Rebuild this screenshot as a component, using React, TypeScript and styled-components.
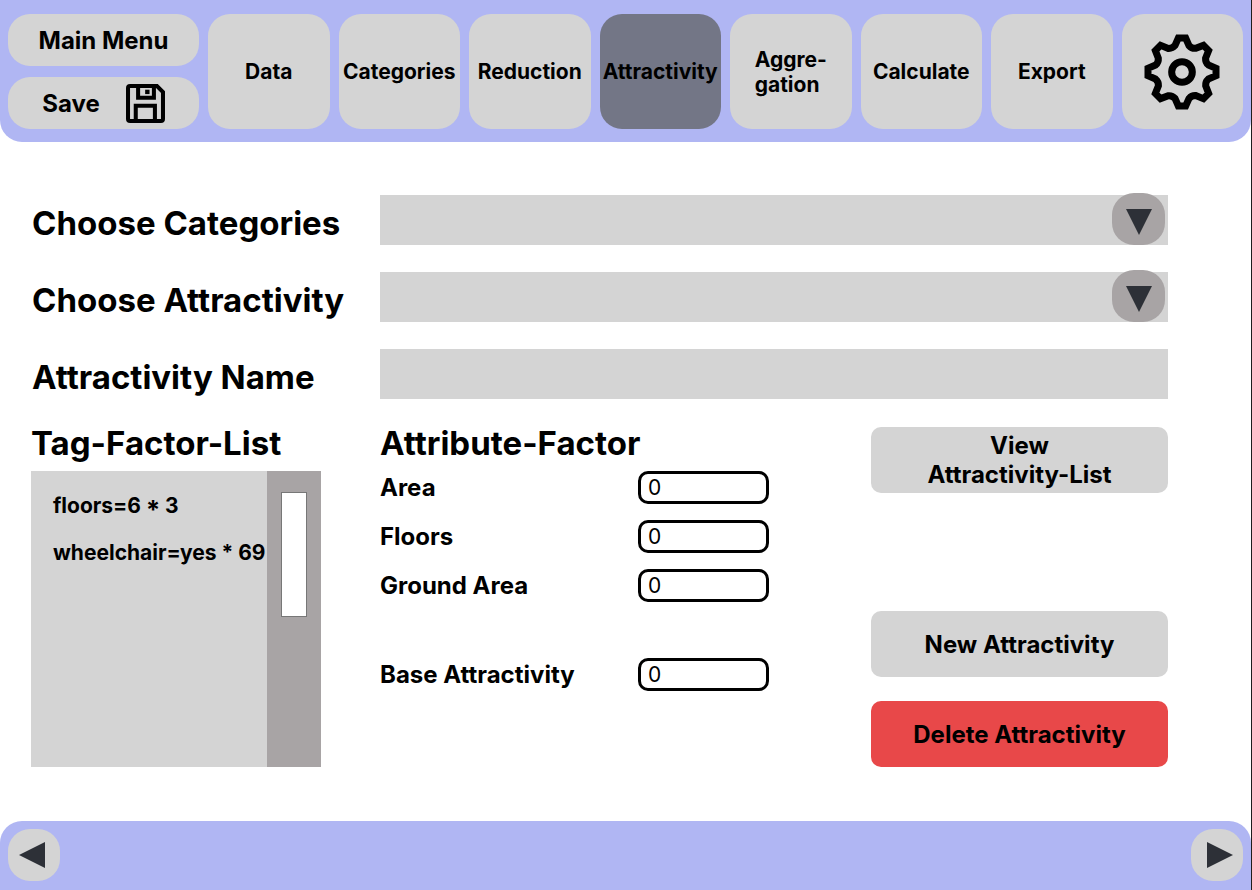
import React from "react";
import styled, { createGlobalStyle } from "styled-components";

const color = {
  lavender: "#b0b6f3",
  grey: "#d4d4d4",
  active: "#737686",
  taupe: "#a8a4a5",
  red: "#e84849",
  arrow: "#2d3037",
  edge: "#1e1e1e",
};

const GlobalStyle = createGlobalStyle`
  *, *::before, *::after { box-sizing: border-box; }
  body { margin: 0; background: #ffffff; }
  body, button, input, select {
    font-family: Inter, "Liberation Sans", sans-serif;
    font-variant-ligatures: no-common-ligatures;
    color: #000000;
  }
  button, input, select { margin: 0; padding: 0; border: 0; }
  button { cursor: pointer; }
  h2, ul { margin: 0; padding: 0; }
`;

const Page = styled.div`
  display: flex;
  flex-direction: column;
  min-height: 100vh;
  border-right: 1px solid ${color.edge};
`;

const Header = styled.header`
  display: grid;
  grid-template-columns: 191px minmax(0, 1fr);
  gap: 9px;
  padding: 14px 8px 13px;
  background: ${color.lavender};
  border-radius: 0 0 22px 22px;
`;

const MenuColumn = styled.div`
  display: flex;
  flex-direction: column;
  gap: 11px;
`;

const MenuButton = styled.button`
  display: flex;
  align-items: center;
  justify-content: center;
  gap: 26px;
  height: 52px;
  border-radius: 22px;
  background: ${color.grey};
  font-size: 24px;
  font-weight: 700;
`;

const Tabs = styled.nav`
  display: grid;
  grid-template-columns: repeat(8, minmax(0, 1fr));
  gap: 9px;
`;

const Tab = styled.button<{ $active?: boolean }>`
  display: flex;
  align-items: center;
  justify-content: center;
  border-radius: 22px;
  background: ${(p) => (p.$active ? color.active : color.grey)};
  font-size: 21px;
  font-weight: 700;
  line-height: 25px;
  text-align: left;
`;

const Main = styled.main`
  flex: 1;
  padding: 53px 83px 54px 31px;
`;

const Fields = styled.div`
  display: grid;
  grid-template-columns: 349px minmax(0, 1fr);
  row-gap: 27px;
  align-items: center;
`;

const FieldLabel = styled.label`
  padding: 6px 0 0 1px;
  font-size: 33px;
  font-weight: 700;
  line-height: 40px;
  white-space: nowrap;
`;

const SelectBox = styled.div`
  position: relative;
`;

const Select = styled.select`
  display: block;
  width: 100%;
  height: 50px;
  padding: 0 64px 0 12px;
  border-radius: 0;
  appearance: none;
  background: ${color.grey};
  font-size: 21px;
`;

const SelectArrow = styled.span`
  position: absolute;
  right: 3px;
  bottom: 0;
  display: grid;
  place-items: center;
  width: 53px;
  height: 52px;
  padding-top: 6px;
  border-radius: 22px;
  background: ${color.taupe};
  pointer-events: none;
`;

const NameInput = styled.input`
  width: 100%;
  height: 50px;
  padding: 0 12px;
  background: ${color.grey};
  font-size: 21px;
`;

const Lower = styled.div`
  display: grid;
  grid-template-columns: 290px minmax(0, 1fr) 297px;
  column-gap: 59px;
  margin-top: 28px;
`;

const Heading = styled.h2`
  height: 44px;
  font-size: 33px;
  font-weight: 700;
  line-height: 32px;
  white-space: nowrap;
`;

const TagBox = styled.div`
  display: grid;
  grid-template-columns: minmax(0, 1fr) 54px;
  height: 296px;
  background: ${color.grey};
`;

const TagList = styled.ul`
  display: flex;
  flex-direction: column;
  gap: 22px;
  padding: 22px 0 0 22px;
  list-style: none;
  font-size: 21px;
  font-weight: 700;
  line-height: 25px;
  white-space: nowrap;
`;

const ScrollTrack = styled.div`
  padding: 21px 14px;
  background: ${color.taupe};
`;

const ScrollThumb = styled.div`
  height: 125px;
  border: 1px solid #777777;
  background: #ffffff;
`;

const Factors = styled.div`
  display: flex;
  flex-direction: column;
  gap: 16px;
`;

const FactorRow = styled.div<{ $apart?: boolean }>`
  display: grid;
  grid-template-columns: 258px 131px;
  align-items: center;
  margin-top: ${(p) => (p.$apart ? 40 : 0)}px;
`;

const FactorLabel = styled.label`
  font-size: 24px;
  font-weight: 700;
  line-height: 33px;
`;

const FactorInput = styled.input`
  width: 100%;
  height: 33px;
  padding: 0 7px;
  border: 3px solid #000000;
  border-radius: 10px;
  background: #ffffff;
  font-size: 21px;
  font-weight: 400;
`;

const Actions = styled.div`
  display: flex;
  flex-direction: column;
  gap: 24px;
`;

const ActionButton = styled.button<{ $danger?: boolean }>`
  height: 66px;
  padding: 0 40px;
  border-radius: 10px;
  background: ${(p) => (p.$danger ? color.red : color.grey)};
  font-size: 24px;
  font-weight: 700;
  line-height: 29px;
  white-space: nowrap;

  &:first-child {
    margin-bottom: 94px;
  }
`;

const Footer = styled.footer`
  display: flex;
  justify-content: space-between;
  padding: 8px 8px 9px;
  background: ${color.lavender};
  border-radius: 22px 22px 0 0;
`;

const StepButton = styled.button<{ $to: "left" | "right" }>`
  display: grid;
  place-items: center;
  width: 52px;
  height: 52px;
  padding-${(p) => (p.$to === "left" ? "right" : "left")}: 5px;
  border-radius: 22px;
  background: ${color.grey};
`;

function SaveIcon() {
  return (
    <svg width="39" height="39" viewBox="0 0 116 116" fill="none" stroke="#000" strokeWidth="12" aria-hidden="true">
      <path d="M6 12Q6 6 12 6H92L110 24V104Q110 110 104 110H12Q6 110 6 104Z" />
      <path d="M36 6V41H83V6" />
      <path d="M29 110V65H86V110" />
      <rect x="57" y="17" width="13" height="13" fill="#000" stroke="none" />
    </svg>
  );
}

function gearPath() {
  const corners = [
    [-11, -102],
    [11, -102],
    [21, -79],
    [29, -70],
    [41, -71],
  ];
  let d = "";
  for (let tooth = 0; tooth < 8; tooth++) {
    const a = (tooth * Math.PI) / 4;
    const p = corners.map(
      ([x, y]) =>
        `${(x * Math.cos(a) - y * Math.sin(a)).toFixed(1)} ${(x * Math.sin(a) + y * Math.cos(a)).toFixed(1)}`
    );
    d += `${tooth ? "L" : "M"}${p[0]}L${p[1]}L${p[2]}Q${p[3]} ${p[4]}`;
  }
  return d + "Z";
}

function GearIcon() {
  return (
    <svg width="76" height="76" viewBox="-114 -114 228 228" fill="none" stroke="#000" strokeWidth="21" aria-hidden="true">
      <path d={gearPath()} />
      <circle r="31" />
    </svg>
  );
}

const triangles = {
  down: "M0 0H26L13 26Z",
  left: "M26 0V26L0 13Z",
  right: "M0 0V26L26 13Z",
};

function Triangle({ to }: { to: keyof typeof triangles }) {
  return (
    <svg width="26" height="26" viewBox="0 0 26 26" aria-hidden="true">
      <path d={triangles[to]} fill={color.arrow} />
    </svg>
  );
}

function SelectField({ id, label }: { id: string; label: string }) {
  return (
    <>
      <FieldLabel htmlFor={id}>{label}</FieldLabel>
      <SelectBox>
        <Select id={id} defaultValue="">
          <option value="" />
        </Select>
        <SelectArrow>
          <Triangle to="down" />
        </SelectArrow>
      </SelectBox>
    </>
  );
}

function Factor({ id, label, apart }: { id: string; label: string; apart?: boolean }) {
  return (
    <FactorRow $apart={apart}>
      <FactorLabel htmlFor={id}>{label}</FactorLabel>
      <FactorInput id={id} type="text" inputMode="numeric" defaultValue="0" />
    </FactorRow>
  );
}

export default function App() {
  return (
    <>
      <GlobalStyle />
      <Page>
        <Header>
          <MenuColumn>
            <MenuButton type="button">Main Menu</MenuButton>
            <MenuButton type="button">
              Save
              <SaveIcon />
            </MenuButton>
          </MenuColumn>
          <Tabs>
            <Tab type="button">Data</Tab>
            <Tab type="button">Categories</Tab>
            <Tab type="button">Reduction</Tab>
            <Tab type="button" $active aria-current="page">
              Attractivity
            </Tab>
            <Tab type="button">
              Aggre-
              <br />
              gation
            </Tab>
            <Tab type="button">Calculate</Tab>
            <Tab type="button">Export</Tab>
            <Tab type="button" aria-label="Settings">
              <GearIcon />
            </Tab>
          </Tabs>
        </Header>

        <Main>
          <Fields>
            <SelectField id="categories" label="Choose Categories" />
            <SelectField id="attractivity" label="Choose Attractivity" />
            <FieldLabel htmlFor="name">Attractivity Name</FieldLabel>
            <NameInput id="name" type="text" />
          </Fields>

          <Lower>
            <section>
              <Heading>Tag-Factor-List</Heading>
              <TagBox>
                <TagList>
                  <li>floors=6 * 3</li>
                  <li>wheelchair=yes * 69</li>
                </TagList>
                <ScrollTrack>
                  <ScrollThumb />
                </ScrollTrack>
              </TagBox>
            </section>

            <section>
              <Heading>Attribute-Factor</Heading>
              <Factors>
                <Factor id="area" label="Area" />
                <Factor id="floors" label="Floors" />
                <Factor id="ground-area" label="Ground Area" />
                <Factor id="base" label="Base Attractivity" apart />
              </Factors>
            </section>

            <Actions>
              <ActionButton type="button">
                View
                <br />
                Attractivity-List
              </ActionButton>
              <ActionButton type="button">New Attractivity</ActionButton>
              <ActionButton type="button" $danger>
                Delete Attractivity
              </ActionButton>
            </Actions>
          </Lower>
        </Main>

        <Footer>
          <StepButton type="button" $to="left" aria-label="Previous step">
            <Triangle to="left" />
          </StepButton>
          <StepButton type="button" $to="right" aria-label="Next step">
            <Triangle to="right" />
          </StepButton>
        </Footer>
      </Page>
    </>
  );
}
